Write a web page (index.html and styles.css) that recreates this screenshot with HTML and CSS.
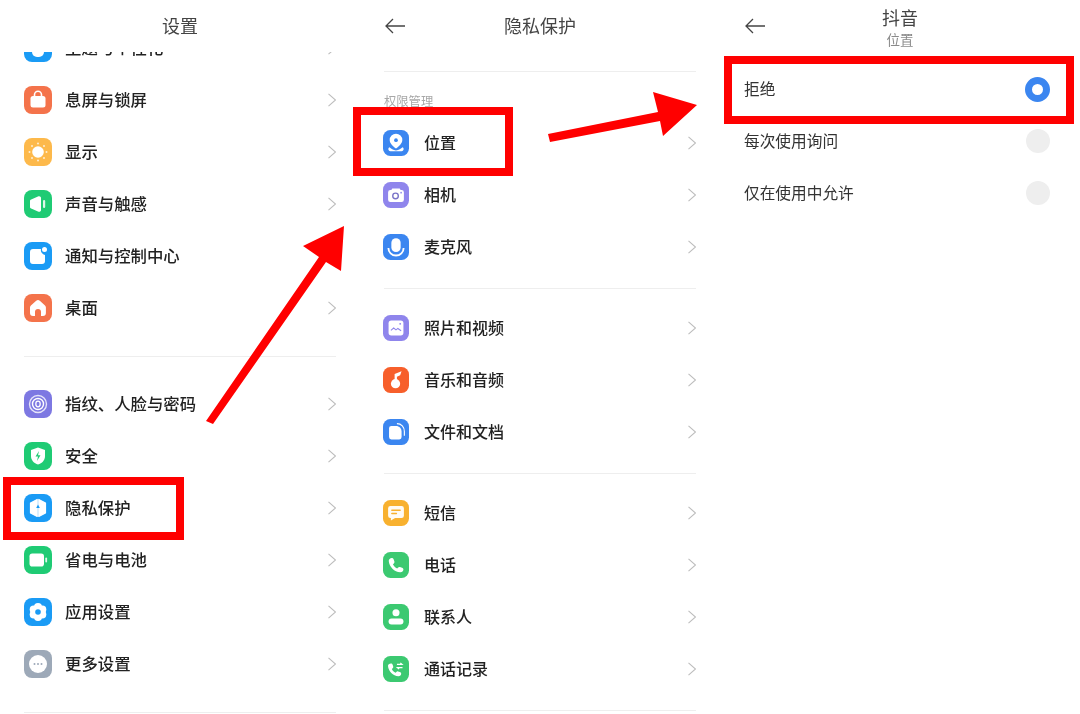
FILE: index.html
```html
<!DOCTYPE html>
<html lang="zh-CN">
<head>
<meta charset="utf-8">
<title>隐私保护</title>
<link rel="stylesheet" href="styles.css">
</head>
<body>
<main class="stage">
  <section class="panel panel-settings">
    <header class="header"><span></span><h1 class="title">设置</h1><span></span></header>
    <div class="scroll">
      <div class="row row-cut">
        <svg class="icon" viewBox="0 0 28 28"><rect width="28" height="28" rx="8" fill="#1A9BF5"/><path d="M8 10h12v8a5 5 0 0 1-5 5h-2a5 5 0 0 1-5-5z" fill="#fff"/></svg>
        <span class="label">主题与个性化</span>
        <svg class="chev" viewBox="0 0 8 14"><path d="M.5 .8l7 6.200-7 6.200"/></svg>
      </div>
      <div class="row">
        <svg class="icon" viewBox="0 0 28 28"><rect width="28" height="28" rx="8" fill="#F4734B"/><path d="M10.500 10V8.800a3.500 3.500 0 0 1 7 0V10" fill="none" stroke="#fff" stroke-width="1.600"/><rect x="6.500" y="10" width="15" height="11.500" rx="2.500" fill="#fff"/></svg>
        <span class="label">息屏与锁屏</span>
        <svg class="chev" viewBox="0 0 8 14"><path d="M.5 .8l7 6.200-7 6.200"/></svg>
      </div>
      <div class="row">
        <svg class="icon" viewBox="0 0 28 28"><rect width="28" height="28" rx="8" fill="#FDB94B"/><circle cx="14" cy="14" r="5.800" fill="#fff"/><g fill="#fff" opacity=".75"><circle cx="14" cy="5.500" r="1"/><circle cx="14" cy="22.500" r="1"/><circle cx="5.500" cy="14" r="1"/><circle cx="22.500" cy="14" r="1"/><circle cx="8" cy="8" r="1"/><circle cx="20" cy="8" r="1"/><circle cx="8" cy="20" r="1"/><circle cx="20" cy="20" r="1"/></g></svg>
        <span class="label">显示</span>
        <svg class="chev" viewBox="0 0 8 14"><path d="M.5 .8l7 6.200-7 6.200"/></svg>
      </div>
      <div class="row">
        <svg class="icon" viewBox="0 0 28 28"><rect width="28" height="28" rx="8" fill="#1FCB74"/><path d="M6 11c0-.8.500-1.300 1.200-1.600l7.300-3.100c1.200-.5 2.500.3 2.500 1.700v12c0 1.400-1.300 2.200-2.500 1.700l-7.300-3.100C6.500 18.300 6 17.800 6 17z" fill="#fff"/><rect x="19" y="10" width="2.200" height="8" rx="1.100" fill="#fff" opacity=".85"/></svg>
        <span class="label">声音与触感</span>
        <svg class="chev" viewBox="0 0 8 14"><path d="M.5 .8l7 6.200-7 6.200"/></svg>
      </div>
      <div class="row">
        <svg class="icon" viewBox="0 0 28 28"><rect width="28" height="28" rx="8" fill="#1A9BF5"/><path d="M9 7h8a5 5 0 0 0 4 6v6a3 3 0 0 1-3 3H9a3 3 0 0 1-3-3V10a3 3 0 0 1 3-3z" fill="#fff"/><circle cx="20.500" cy="7.500" r="2.500" fill="#fff"/></svg>
        <span class="label">通知与控制中心</span>
        <svg class="chev" viewBox="0 0 8 14"><path d="M.5 .8l7 6.200-7 6.200"/></svg>
      </div>
      <div class="row">
        <svg class="icon" viewBox="0 0 28 28"><rect width="28" height="28" rx="8" fill="#F4734B"/><path fill-rule="evenodd" d="M12.200 6.800a2.700 2.700 0 0 1 3.600 0l5.200 4.700c.6.500.9 1.200.9 2V19a3 3 0 0 1-3 3h-1.900v-4a3 3 0 0 0-6 0v4H9a3 3 0 0 1-3-3v-5.500c0-.8.300-1.500.9-2z" fill="#fff"/></svg>
        <span class="label">桌面</span>
        <svg class="chev" viewBox="0 0 8 14"><path d="M.5 .8l7 6.200-7 6.200"/></svg>
      </div>
      <hr class="rule rule-settings">
      <div class="row">
        <svg class="icon" viewBox="0 0 28 28"><rect width="28" height="28" rx="8" fill="#7D78E2"/><g fill="none" stroke="#fff"><circle cx="14" cy="14" r="8.500" stroke-width="1.400" opacity=".8"/><circle cx="14" cy="14" r="5.500" stroke-width="1.400"/><ellipse cx="14" cy="14" rx="2.200" ry="2.800" stroke-width="1.300"/></g></svg>
        <span class="label">指纹、人脸与密码</span>
        <svg class="chev" viewBox="0 0 8 14"><path d="M.5 .8l7 6.200-7 6.200"/></svg>
      </div>
      <div class="row">
        <svg class="icon" viewBox="0 0 28 28"><rect width="28" height="28" rx="8" fill="#1FCB74"/><path d="M14 5.500l7 2.500v6c0 4.500-3 7.200-7 8.500-4-1.300-7-4-7-8.500V8z" fill="#fff"/><path d="M15 9l-3.500 5.500H14l-1 4.500 3.500-5.800H14z" fill="#1FCB74"/></svg>
        <span class="label">安全</span>
        <svg class="chev" viewBox="0 0 8 14"><path d="M.5 .8l7 6.200-7 6.200"/></svg>
      </div>
      <div class="row">
        <svg class="icon" viewBox="0 0 28 28"><rect width="28" height="28" rx="8" fill="#1A9BF5"/><path d="M13.200 5.500v17L6.500 19V9z" fill="#fff" stroke="#fff" stroke-width="1.200" stroke-linejoin="round"/><path d="M14.800 5.500v17L21.500 19V9z" fill="#fff" stroke="#fff" stroke-width="1.200" stroke-linejoin="round"/><path d="M14 10.500l1.800 3.500h-3.600z" fill="#1A9BF5"/></svg>
        <span class="label">隐私保护</span>
        <svg class="chev" viewBox="0 0 8 14"><path d="M.5 .8l7 6.200-7 6.200"/></svg>
      </div>
      <div class="row">
        <svg class="icon" viewBox="0 0 28 28"><rect width="28" height="28" rx="8" fill="#1FCB74"/><rect x="5.500" y="7.500" width="14.500" height="13" rx="2.800" fill="#fff"/><rect x="21.300" y="11.500" width="1.800" height="5" rx=".9" fill="#fff" opacity=".85"/></svg>
        <span class="label">省电与电池</span>
        <svg class="chev" viewBox="0 0 8 14"><path d="M.5 .8l7 6.200-7 6.200"/></svg>
      </div>
      <div class="row">
        <svg class="icon" viewBox="0 0 28 28"><rect width="28" height="28" rx="8" fill="#1A9BF5"/><g fill="#fff"><circle cx="14" cy="9" r="4"/><circle cx="14" cy="19" r="4"/><circle cx="9.700" cy="11.500" r="4"/><circle cx="18.300" cy="11.500" r="4"/><circle cx="9.700" cy="16.500" r="4"/><circle cx="18.300" cy="16.500" r="4"/></g><circle cx="14" cy="14" r="2.800" fill="#1A9BF5"/></svg>
        <span class="label">应用设置</span>
        <svg class="chev" viewBox="0 0 8 14"><path d="M.5 .8l7 6.200-7 6.200"/></svg>
      </div>
      <div class="row">
        <svg class="icon" viewBox="0 0 28 28"><rect width="28" height="28" rx="8" fill="#9DA9B8"/><circle cx="14" cy="14" r="9" fill="#fff"/><g fill="#9DA9B8"><circle cx="10.500" cy="14" r="1"/><circle cx="14" cy="14" r="1"/><circle cx="17.500" cy="14" r="1"/></g></svg>
        <span class="label">更多设置</span>
        <svg class="chev" viewBox="0 0 8 14"><path d="M.5 .8l7 6.200-7 6.200"/></svg>
      </div>
      <hr class="rule rule-last">
    </div>
  </section>

  <section class="panel panel-privacy">
    <header class="header">
      <svg class="back" viewBox="0 0 20 16"><path d="M8 1L1 8l7 7M1 8h19"/></svg>
      <h1 class="title">隐私保护</h1><span></span>
    </header>
    <hr class="rule rule-top">
    <p class="caption">权限管理</p>
    <div class="row">
      <svg class="icon" viewBox="0 0 28 28"><rect width="28" height="28" rx="8" fill="#3B86F0"/><path d="M14 4a6.800 6.800 0 0 0-6.800 6.800c0 3.700 3.600 6.700 6.800 9.200 3.200-2.500 6.800-5.500 6.800-9.200A6.800 6.800 0 0 0 14 4z" fill="#fff"/><circle cx="14" cy="11" r="2" fill="#3B86F0"/><path d="M7 18.500c-2.500 1.500-1 4.500 2 4.500h10c3 0 4.500-3 2-4.500-1.500 1-4 3.500-7 3.500s-5.500-2.500-7-3.500z" fill="#fff"/></svg>
      <span class="label">位置</span>
      <svg class="chev" viewBox="0 0 8 14"><path d="M.5 .8l7 6.200-7 6.200"/></svg>
    </div>
    <div class="row">
      <svg class="icon" viewBox="0 0 28 28"><rect width="28" height="28" rx="8" fill="#8F85EC"/><path d="M10 7h8l1 1.500h1a2.500 2.500 0 0 1 2.500 2.500v8a2.500 2.500 0 0 1-2.500 2.500H8a2.500 2.500 0 0 1-2.500-2.500v-8A2.500 2.500 0 0 1 8 8.500h1z" fill="#fff"/><circle cx="13.500" cy="15" r="3" fill="none" stroke="#7a74c8" stroke-width="1.500"/><circle cx="19.500" cy="11.500" r=".9" fill="#8F85EC"/></svg>
      <span class="label">相机</span>
      <svg class="chev" viewBox="0 0 8 14"><path d="M.5 .8l7 6.200-7 6.200"/></svg>
    </div>
    <div class="row">
      <svg class="icon" viewBox="0 0 28 28"><rect width="28" height="28" rx="8" fill="#3B86F0"/><rect x="9" y="4.500" width="10" height="15" rx="5" fill="#fff"/><path d="M5.800 14a8.200 8.200 0 0 0 16.400 0" fill="none" stroke="#fff" stroke-width="2" transform="translate(0 1)"/></svg>
      <span class="label">麦克风</span>
      <svg class="chev" viewBox="0 0 8 14"><path d="M.5 .8l7 6.200-7 6.200"/></svg>
    </div>
    <hr class="rule rule-privacy">
    <div class="row">
      <svg class="icon" viewBox="0 0 28 28"><rect width="28" height="28" rx="8" fill="#8F85EC"/><rect x="6" y="6" width="16" height="16" rx="3" fill="#fff"/><path d="M8.500 16.500l3-2.500 2.500 2 2-1.500 3.500 2.500" fill="none" stroke="#8F85EC" stroke-width="1.100"/><circle cx="18.500" cy="9.500" r="1" fill="#8F85EC"/></svg>
      <span class="label">照片和视频</span>
      <svg class="chev" viewBox="0 0 8 14"><path d="M.5 .8l7 6.200-7 6.200"/></svg>
    </div>
    <div class="row">
      <svg class="icon" viewBox="0 0 28 28"><rect width="28" height="28" rx="8" fill="#F75F2B"/><circle cx="13.500" cy="18" r="5" fill="#fff"/><path d="M12.500 17V7.500L20 4.500l-1.500 4.500-3.500 1.500V17z" fill="#fff"/></svg>
      <span class="label">音乐和音频</span>
      <svg class="chev" viewBox="0 0 8 14"><path d="M.5 .8l7 6.200-7 6.200"/></svg>
    </div>
    <div class="row">
      <svg class="icon" viewBox="0 0 28 28"><rect width="28" height="28" rx="8" fill="#3B86F0"/><path d="M9 7.500h5c3.500 0 6 2.500 6 6v6a2.500 2.500 0 0 1-2.500 2.500H9a2.500 2.500 0 0 1-2.500-2.500V10A2.500 2.500 0 0 1 9 7.500z" fill="#fff"/><path d="M15 5c4.800 0 8 3.500 8 8.500v4.500" fill="none" stroke="#fff" stroke-width="1.200"/></svg>
      <span class="label">文件和文档</span>
      <svg class="chev" viewBox="0 0 8 14"><path d="M.5 .8l7 6.200-7 6.200"/></svg>
    </div>
    <hr class="rule rule-privacy">
    <div class="row">
      <svg class="icon" viewBox="0 0 28 28"><rect width="28" height="28" rx="8" fill="#F8B12F"/><path d="M8 6.500h12A2.500 2.500 0 0 1 22.500 9v8a2.500 2.500 0 0 1-2.500 2.500h-7l-4.500 2.500v-2.500H8A2.500 2.500 0 0 1 5.500 17V9A2.500 2.500 0 0 1 8 6.500z" fill="#fff" opacity=".95"/><path d="M9.500 11h9M9.500 14.500h5" stroke="#F8B12F" stroke-width="1.500" stroke-linecap="round"/></svg>
      <span class="label">短信</span>
      <svg class="chev" viewBox="0 0 8 14"><path d="M.5 .8l7 6.200-7 6.200"/></svg>
    </div>
    <div class="row">
      <svg class="icon" viewBox="0 0 28 28"><rect width="28" height="28" rx="8" fill="#3CC971"/><path d="M9.500 6.500c1 0 1.700.6 2 1.500l.8 2.300c.2.800 0 1.500-.6 2l-1 .9c.9 2 2.500 3.500 4.600 4.500l1-1c.5-.6 1.200-.8 2-.6l2.200.8c1 .3 1.500 1 1.500 2 0 1.800-1.600 3.100-3.400 3-6.500-.6-11.800-5.800-12.400-12.300C6.100 8.100 7.700 6.500 9.500 6.500z" fill="#fff"/></svg>
      <span class="label">电话</span>
      <svg class="chev" viewBox="0 0 8 14"><path d="M.5 .8l7 6.200-7 6.200"/></svg>
    </div>
    <div class="row">
      <svg class="icon" viewBox="0 0 28 28"><rect width="28" height="28" rx="8" fill="#3CC971"/><circle cx="14" cy="9.500" r="3.800" fill="#fff"/><rect x="6" y="15.500" width="16" height="6.500" rx="3.250" fill="#fff"/></svg>
      <span class="label">联系人</span>
      <svg class="chev" viewBox="0 0 8 14"><path d="M.5 .8l7 6.200-7 6.200"/></svg>
    </div>
    <div class="row">
      <svg class="icon" viewBox="0 0 28 28"><rect width="28" height="28" rx="8" fill="#3CC971"/><path d="M8.500 8c1 0 1.600.5 1.900 1.400l.6 2c.2.700 0 1.400-.6 1.800l-.9.800c.8 1.800 2.200 3.100 4 4l.9-.9c.5-.5 1.100-.7 1.800-.5l2 .7c.9.300 1.400 1 1.400 1.800 0 1.600-1.400 2.800-3 2.700-5.900-.5-10.700-5.300-11.200-11.100C5.300 9.300 6.800 8 8.500 8z" fill="#fff"/><path d="M15 9h5.500l-1.800-1.600M21 12.500h-5.500l1.800 1.600" fill="none" stroke="#fff" stroke-width="1.300"/></svg>
      <span class="label">通话记录</span>
      <svg class="chev" viewBox="0 0 8 14"><path d="M.5 .8l7 6.200-7 6.200"/></svg>
    </div>
    <hr class="rule rule-privacy">
  </section>

  <section class="panel panel-app">
    <header class="header header-tall">
      <svg class="back back-tall" viewBox="0 0 20 16"><path d="M8 1L1 8l7 7M1 8h19"/></svg>
      <div class="title-stack">
        <h1 class="title">抖音</h1>
        <p class="subtitle">位置</p>
      </div>
      <span></span>
    </header>
    <div class="option"><span>拒绝</span><i class="radio radio-on"></i></div>
    <div class="option"><span>每次使用询问</span><i class="radio"></i></div>
    <div class="option"><span>仅在使用中允许</span><i class="radio"></i></div>
  </section>

  <div class="mark mark-a"></div>
  <div class="mark mark-b"></div>
  <div class="mark mark-c"></div>
  <svg class="arrows" viewBox="0 0 1080 714">
    <polygon points="206,421 319,257 303,246 344,226 341,271 326,262 213,424"/>
    <polygon points="548,134 658,112 653,92 697,105 663,136 660,121 550,142"/>
  </svg>
</main>
</body>
</html>
```

FILE: styles.css
```css
* { box-sizing: border-box; }
html, body { margin: 0; padding: 0; background: #fff; }
body { font-family: "Noto Sans CJK SC", "Noto Sans", sans-serif; color: #222; }

.stage {
  position: relative;
  display: flex;
  width: 1080px;
  height: 714px;
  overflow: hidden;
  background: #fff;
  filter: blur(0.3px);
}

.panel {
  display: flex;
  flex-direction: column;
  width: 360px;
  height: 714px;
  padding: 0 24px;
  overflow: hidden;
}

.header {
  display: grid;
  grid-template-columns: 1fr auto 1fr;
  align-items: center;
  flex: none;
  height: 52px;
}
.header-tall { height: 63px; align-items: start; }

.title {
  margin: 0;
  font-size: 18px;
  font-weight: 400;
  line-height: 24px;
  padding-bottom: 2px;
  color: #444;
  text-align: center;
}
.title-stack { padding-top: 5px; }
.title-stack .title { padding-bottom: 0; }
.subtitle {
  margin: 1px 0 0;
  font-size: 13.500px;
  line-height: 18px;
  color: #8a8a8a;
  text-align: center;
}

.back {
  width: 20px;
  height: 16px;
  margin-left: 1px;
  fill: none;
  stroke: #444;
  stroke-width: 1.300;
}
.back-tall { margin-top: 18px; }

.scroll { flex: 1; min-height: 0; overflow: hidden; }

.row {
  display: flex;
  align-items: center;
  flex: none;
  height: 52px;
}
.row-cut { margin-top: -30px; }

.icon { flex: none; width: 28px; height: 28px; }
.label {
  flex: 1;
  margin-left: 13px;
  padding-bottom: 2px;
  font-size: 16.400px;
  font-weight: 500;
  line-height: 24px;
  color: #222;
}

.chev {
  flex: none;
  width: 8px;
  height: 14px;
  fill: none;
  stroke: #bdbdbd;
  stroke-width: 1.100;
}

.rule { height: 1px; margin: 0; border: 0; background: #eeeeee; flex: none; }
.rule-settings { margin: 22px 0 21px; }
.rule-last { margin-top: 22px; }
.rule-top { margin-top: 19px; }
.rule-privacy { margin: 15px 0 13px; }

.caption {
  margin: 20px 0 7px;
  font-size: 12.300px;
  line-height: 18px;
  color: #a8a8a8;
}

.panel-privacy .icon { width: 26px; height: 26px; margin-left: -1px; }
.panel-privacy .label { margin-left: 15px; font-size: 16px; }

.option {
  display: flex;
  align-items: center;
  justify-content: space-between;
  flex: none;
  height: 52px;
  padding-right: 6px;
  font-size: 15.700px;
  color: #333;
}
.option span { padding-bottom: 2px; }
.radio { display: block; width: 24px; height: 24px; border-radius: 50%; background: #eeeeee; }
.radio-on { width: 25px; height: 25px; border: 7px solid #3B86F0; background: #fff; }

.mark { position: absolute; border: 8px solid #f00; }
.mark-a { left: 3px; top: 477px; width: 181px; height: 63px; }
.mark-b { left: 353px; top: 107px; width: 160px; height: 69px; }
.mark-c { left: 724px; top: 56px; width: 350px; height: 68px; }

.arrows { position: absolute; left: 0; top: 0; width: 1080px; height: 714px; fill: #f00; }
```
